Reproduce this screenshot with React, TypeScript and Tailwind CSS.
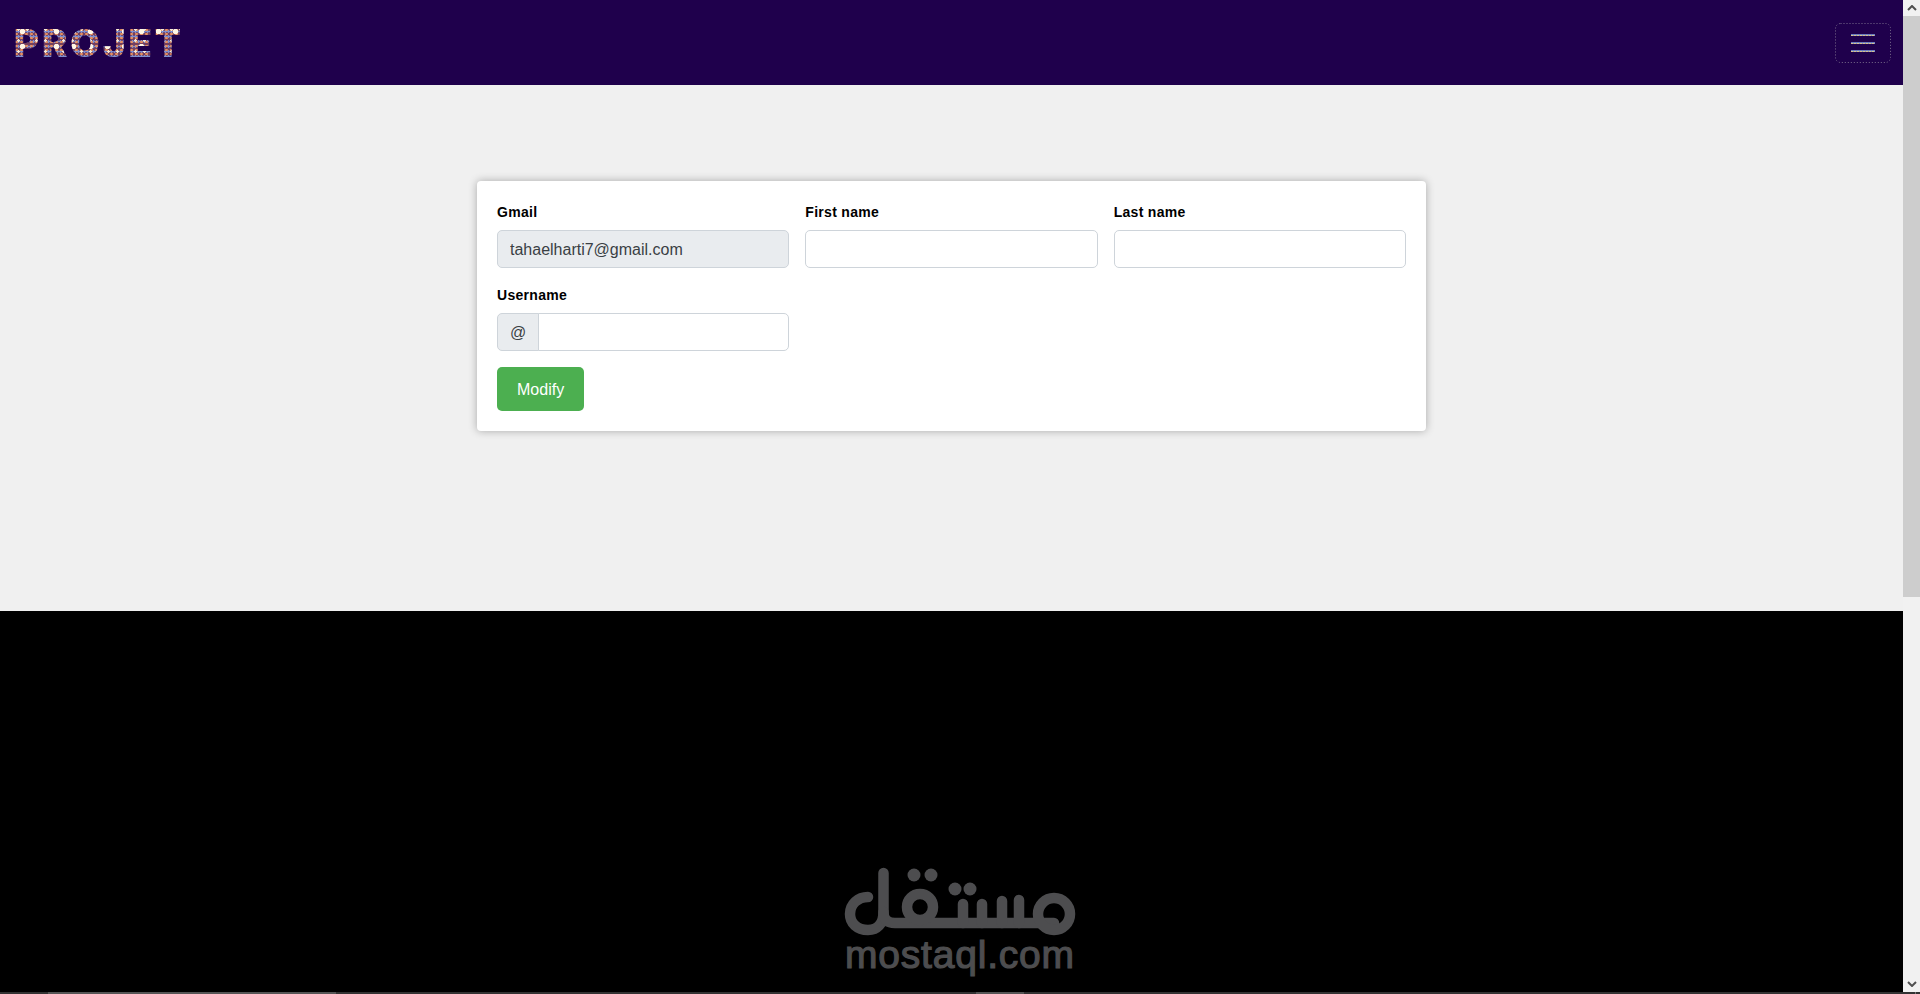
import React from 'react'

const inputClass =
  'h-[38px] w-full rounded-[5px] border border-[#ced4da] px-3 pt-px text-base text-[#3a3f44] outline-none'

function Field({ label, children }: { label: string; children: React.ReactNode }) {
  return (
    <div>
      <label className="mb-[6px] block text-sm leading-[23px] font-bold tracking-[0.3px] text-black">{label}</label>
      {children}
    </div>
  )
}

function MostaqlMark() {
  return (
    <svg viewBox="844 866 234 72" className="h-[72px] w-[234px]" fill="none" stroke="#4d4d4f" strokeWidth="10.5" strokeLinecap="round" strokeLinejoin="round">
      <path d="M883.5 873V912C883.5 924 877 930 868 930C857 930 850 923 850 914C850 904 858 897 868 897" />
      <path d="M883.5 912C883.5 920 888 923 895 923H1054" />
      <circle cx="920" cy="907" r="13" />
      <path d="M963 904V923M982 904V923M1002 901V923M1019 900V923" />
      <circle cx="1054" cy="914" r="16" />
      <g fill="#4d4d4f" stroke="none">
        <circle cx="914" cy="875" r="6.5" />
        <circle cx="931" cy="875" r="6.5" />
        <circle cx="955" cy="889" r="6.5" />
        <circle cx="970" cy="889" r="6.5" />
      </g>
    </svg>
  )
}

function TogglerBar() {
  return <span className="h-[2px] w-6 border-t border-[#6c7dbd] bg-[repeating-linear-gradient(90deg,#d8c28a_0_2px,#8a93c8_2px_3px)]" />
}

export default function App() {
  return (
    <div className="relative flex h-[994px] overflow-hidden bg-black font-['Liberation_Sans',Arial,sans-serif]">
      <div className="relative flex min-w-0 flex-1 flex-col">
        <nav className="flex h-[85px] items-center justify-between bg-[#1f004c] pr-3 pl-[14px]">
          <span className="bg-[#74405f] bg-[radial-gradient(circle,#fff6e6_0_2.5px,transparent_3px),radial-gradient(circle,#f5ead8_0_1px,transparent_1.5px),radial-gradient(circle,#e98f5e_0_1px,transparent_1.5px),radial-gradient(circle,#7e8fd0_0_1px,transparent_1.5px)] bg-[length:17px_15px,9px_11px,5px_4px,3px_5px] bg-clip-text font-['Inter',sans-serif] text-[38px] leading-none font-black tracking-[3px] text-transparent">
            PROJET
          </span>
          <button className="relative flex h-10 w-14 flex-col items-center justify-center gap-[6px]">
            <svg viewBox="0 0 56 40" className="absolute inset-0 h-10 w-14" fill="none">
              <rect x="0.5" y="0.5" width="55" height="39" rx="5" stroke="#7a6c8c" strokeDasharray="1 2" />
            </svg>
            <TogglerBar />
            <TogglerBar />
            <TogglerBar />
          </button>
        </nav>

        <main className="h-[526px] bg-[#f0f0f0] pt-24">
          <div className="ml-[477px] w-[949px] rounded bg-white p-5 shadow-[0_0_8px_rgba(0,0,0,0.3)]">
            <div className="grid grid-cols-3 gap-x-4 gap-y-4">
              <Field label="Gmail">
                <input className={`${inputClass} bg-[#e9ecef]`} value="tahaelharti7@gmail.com" disabled readOnly />
              </Field>
              <Field label="First name">
                <input className={`${inputClass} bg-white`} />
              </Field>
              <Field label="Last name">
                <input className={`${inputClass} bg-white`} />
              </Field>
              <Field label="Username">
                <div className="flex">
                  <span className="flex h-[38px] items-center rounded-l-[5px] border border-[#ced4da] bg-[#e9ecef] px-3 pt-px text-base text-[#3a3f44]">@</span>
                  <input className="-ml-px h-[38px] min-w-0 flex-1 rounded-r-[5px] border border-[#ced4da] bg-white px-3 outline-none" />
                </div>
              </Field>
            </div>
            <button className="mt-4 h-11 rounded-[5px] bg-[#4caf50] px-5 pt-px text-base text-white">Modify</button>
          </div>
        </main>

        {/* watermark over the black footer */}
        <div className="absolute top-[866px] left-[844px]">
          <MostaqlMark />
        </div>
        <span className="absolute top-[935px] left-[845px] text-[39px] leading-[39px] tracking-[0.8px] text-[#4d4d4f] [-webkit-text-stroke:1.2px_#4d4d4f]">
          mostaql.com
        </span>
      </div>

      <div className="flex w-[17px] shrink-0 flex-col bg-[#f1f1f1]">
        <div className="flex h-4 items-center justify-center text-[#505050]">
          <svg viewBox="0 0 10 6" className="w-[10px]" fill="none" stroke="currentColor" strokeWidth="2"><path d="M1 5l4-4 4 4" /></svg>
        </div>
        <div className="h-[581px] bg-[#cdcdcd]" />
        <div className="flex-1" />
        <div className="mb-[2px] flex h-[17px] items-center justify-center text-[#505050]">
          <svg viewBox="0 0 10 6" className="w-[10px]" fill="none" stroke="currentColor" strokeWidth="2"><path d="M1 1l4 4 4-4" /></svg>
        </div>
      </div>

      {/* thin strip along the bottom edge */}
      <div className="absolute inset-x-0 bottom-0 flex h-[2px] bg-[#333]">
        <div className="ml-[48px] h-full w-[288px] bg-[#555]" />
        <div className="ml-[640px] h-full w-[48px] bg-[#555]" />
        <div className="ml-[891px] h-full w-px bg-[#777]" />
      </div>
    </div>
  )
}
